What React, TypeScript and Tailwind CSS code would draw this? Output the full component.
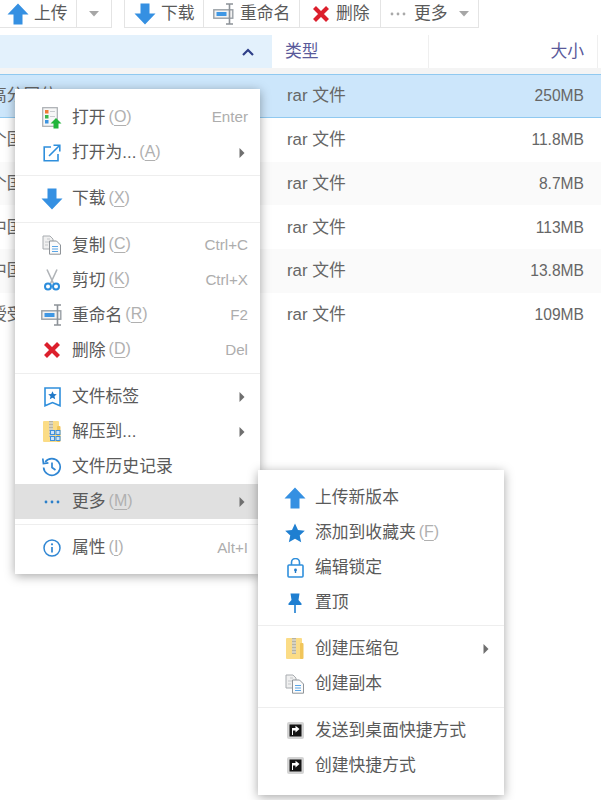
import React from "react";

const FONT = '"Liberation Sans","Noto Sans CJK SC",sans-serif';

function ArrowUp({ s = 22 }: { s?: number }) {
  return (
    <svg width={s} height={s} viewBox="0 0 22 22">
      <path d="M11 0.5 L21.5 11.5 H15.5 V21.5 H6.5 V11.5 H0.5 Z" fill="#3590e2" />
    </svg>
  );
}
function ArrowDown({ s = 22 }: { s?: number }) {
  return (
    <svg width={s} height={s} viewBox="0 0 22 22">
      <path d="M6.5 0.5 H15.5 V10.5 H21.5 L11 21.5 L0.5 10.5 H6.5 Z" fill="#3590e2" />
    </svg>
  );
}
function Rename({ s = 22 }: { s?: number }) {
  return (
    <svg width={s} height={s} viewBox="0 0 22 22">
      <rect x="0.8" y="6.8" width="19" height="8.4" fill="#f2f2f2" stroke="#9aa0a6" strokeWidth="1.4" />
      <rect x="3.5" y="9" width="10" height="4" fill="#3f97e4" />
      <path d="M13 1 H20 M16.5 1 V21 M13 21 H20" stroke="#8d9298" strokeWidth="1.6" fill="none" />
    </svg>
  );
}
function Cross({ s = 18 }: { s?: number }) {
  return (
    <svg width={s} height={s} viewBox="0 0 18 18">
      <path d="M2.5 2.5 L15.5 15.5 M15.5 2.5 L2.5 15.5" stroke="#dc1f2c" strokeWidth="4.2" strokeLinecap="butt" />
    </svg>
  );
}
function Dots({ c = "#2b7fc9" }: { c?: string }) {
  return (
    <svg width="16" height="4" viewBox="0 0 16 4">
      <circle cx="2" cy="2" r="1.4" fill={c} />
      <circle cx="8" cy="2" r="1.4" fill={c} />
      <circle cx="14" cy="2" r="1.4" fill={c} />
    </svg>
  );
}
function OpenApp() {
  return (
    <svg width="20" height="22" viewBox="0 0 20 22">
      <rect x="0.7" y="0.7" width="14.6" height="18.6" fill="#f7f7f7" stroke="#a9adb1" strokeWidth="1.2" />
      <rect x="3" y="3" width="3.5" height="3.5" fill="#ee7a34" />
      <rect x="3" y="8" width="3.5" height="3.5" fill="#39b54a" />
      <rect x="3" y="13" width="3.5" height="3.5" fill="#3b93e0" />
      <path d="M8 4.5 H13 M8 9.5 H13" stroke="#c9ccd0" strokeWidth="1" />
      <path d="M14 11 L19.5 16.5 H16.5 V21.5 H11.5 V16.5 H8.5 Z" fill="#21b53a" />
    </svg>
  );
}
function OpenAs() {
  return (
    <svg width="18" height="18" viewBox="0 0 18 18" fill="none">
      <path d="M8 3 H1.2 V16.8 H15 V10" stroke="#2f8fdc" strokeWidth="1.6" />
      <path d="M6 12 L16 2 M10.5 1.2 H16.8 V7.5" stroke="#2f8fdc" strokeWidth="1.6" />
    </svg>
  );
}
function CopyDoc() {
  return (
    <svg width="20" height="20" viewBox="0 0 20 20">
      <path d="M1 1 H8 L11 4 V14 H1 Z" fill="#f0f0f0" stroke="#a8acb0" />
      <path d="M5 4 H8 M3 7 H8 M3 10 H6" stroke="#c4c7ca" strokeWidth="1" />
      <path d="M7.5 6 H14.5 L18.5 10 V19.2 H7.5 Z" fill="#fbfbfb" stroke="#8f9499" />
      <path d="M10 11.5 H16 M10 14 H16 M10 16.5 H16" stroke="#5aa5e6" strokeWidth="1" />
    </svg>
  );
}
function Scissors() {
  return (
    <svg width="18" height="22" viewBox="0 0 18 22" fill="none">
      <path d="M4 0.5 L10.5 14.5 M14 0.5 L7.5 14.5" stroke="#b0b4b8" strokeWidth="1.6" />
      <circle cx="5" cy="17.5" r="3" stroke="#2b8cdb" strokeWidth="2" />
      <circle cx="13" cy="17.5" r="3" stroke="#2b8cdb" strokeWidth="2" />
    </svg>
  );
}
function Tag() {
  return (
    <svg width="17" height="20" viewBox="0 0 17 20" fill="none">
      <path d="M1 1 H16 V18.8 L8.5 15.5 L1 18.8 Z" stroke="#2f8fdc" strokeWidth="1.6" />
      <path d="M8.5 4.2 L9.8 7 L12.8 7.3 L10.5 9.3 L11.2 12.3 L8.5 10.7 L5.8 12.3 L6.5 9.3 L4.2 7.3 L7.2 7 Z" fill="#2079c8" />
    </svg>
  );
}
function Zip({ grid = false }: { grid?: boolean }) {
  return (
    <svg width="18" height="21" viewBox="0 0 18 21">
      <rect x="0" y="0" width="16" height="21" rx="1" fill="#fbdc86" />
      <rect x="14" y="5" width="3.5" height="16" rx="1" fill="#f1c55a" />
      <rect x="6" y="0" width="4" height="16" fill="#b8b3a0" />
      <path d="M6 2 H10 M6 5 H10 M6 8 H10 M6 11 H10 M6 14 H10" stroke="#f0eee5" strokeWidth="1" />
      {grid && (
        <g fill="#cfe4f8" stroke="#3f8fdb" strokeWidth="1">
          <rect x="7.5" y="9.5" width="4" height="4" />
          <rect x="13" y="9.5" width="4" height="4" />
          <rect x="7.5" y="15.5" width="4" height="4" />
          <rect x="13" y="15.5" width="4" height="4" />
        </g>
      )}
    </svg>
  );
}
function History() {
  return (
    <svg width="20" height="20" viewBox="0 0 20 20" fill="none">
      <path d="M3.2 5 A8.3 8.3 0 1 1 1.6 10.5" stroke="#2f86d3" strokeWidth="1.7" />
      <path d="M0.8 1.5 L1.4 6.5 L6.4 5.8" stroke="#2f86d3" strokeWidth="1.7" />
      <path d="M10 5.5 V10.5 L13.5 13" stroke="#2f86d3" strokeWidth="1.7" />
    </svg>
  );
}
function Info() {
  return (
    <svg width="18" height="18" viewBox="0 0 18 18" fill="none">
      <circle cx="9" cy="9" r="8" stroke="#2f86d3" strokeWidth="1.5" />
      <circle cx="9" cy="5.3" r="1.1" fill="#2f86d3" />
      <path d="M9 8 V13.5" stroke="#2f86d3" strokeWidth="1.7" />
    </svg>
  );
}
function Star() {
  return (
    <svg width="20" height="20" viewBox="0 0 20 20">
      <path d="M10 0.5 L13 7 L19.8 7.7 L14.7 12.4 L16.2 19.3 L10 15.8 L3.8 19.3 L5.3 12.4 L0.2 7.7 L7 7 Z" fill="#1f7fd1" />
    </svg>
  );
}
function Lock() {
  return (
    <svg width="17" height="20" viewBox="0 0 17 20" fill="none">
      <rect x="1" y="7" width="15" height="12" rx="1" stroke="#2f8fdc" strokeWidth="1.6" />
      <path d="M4.5 7 V4.5 A4 4 0 0 1 12.5 4.5 V7" stroke="#2f8fdc" strokeWidth="1.6" />
      <circle cx="8.5" cy="12" r="1.4" fill="#2079c8" />
      <path d="M8.5 12 V15" stroke="#2079c8" strokeWidth="1.4" />
    </svg>
  );
}
function Pin() {
  return (
    <svg width="14" height="20" viewBox="0 0 14 20">
      <path d="M2.5 0.5 H11.5 L10.5 7 L13.5 10.5 V12 H0.5 V10.5 L3.5 7 Z" fill="#1f7fd1" />
      <rect x="6.2" y="12" width="1.6" height="8" fill="#1f7fd1" />
    </svg>
  );
}
function Shortcut() {
  return (
    <svg width="17" height="17" viewBox="0 0 17 17">
      <rect x="0" y="0" width="17" height="17" rx="2" fill="#d4d4d4" />
      <rect x="2.5" y="2.5" width="12" height="12" fill="#141414" />
      <path d="M6 13 V8.5 H8.5 V10.5 L12.5 7 L8.5 3.8 V6 H5 V13 Z" fill="#fff" />
    </svg>
  );
}
function Caret() {
  return (
    <svg width="6" height="10" viewBox="0 0 6 10">
      <path d="M0.5 0 L5.5 5 L0.5 10 Z" fill="#6f6f6f" />
    </svg>
  );
}
function Down() {
  return (
    <svg width="10" height="6" viewBox="0 0 10 6">
      <path d="M0 0 H10 L5 5.5 Z" fill="#a6a6a6" />
    </svg>
  );
}

function Key({ k }: { k: string }) {
  return (
    <span className="mb-[2px] ml-[3px] text-[16px] text-[#b0b0b0]">
      (<span className="underline underline-offset-[3px]">{k}</span>)
    </span>
  );
}

type Item = { icon: React.ReactNode; label: string; k?: string; hint?: string; sub?: boolean; active?: boolean };

function Row({ it }: { it: Item }) {
  return (
    <div className={`flex h-[35px] items-center ${it.active ? "bg-[#e0e0e0]" : ""}`}>
      <div className="flex w-[57px] shrink-0 items-center justify-center pl-[17px]">{it.icon}</div>
      <span className="whitespace-nowrap text-[16.8px] text-[#5a5a5a]">{it.label}</span>
      {it.k && <Key k={it.k} />}
      <div className="flex-1" />
      {it.hint && <span className="mr-[12px] text-[15.2px] text-[#adadad]">{it.hint}</span>}
      {it.sub && (
        <span className="mr-[15px]">
          <Caret />
        </span>
      )}
    </div>
  );
}

function Sep() {
  return (
    <div className="flex h-[11.4px] items-center">
      <div className="h-px w-full bg-[#eeeeee]" />
    </div>
  );
}

const files = [
  { n: "高分冈位", s: "250MB", bg: "bg-[#cce6fb] border-y border-[#90c9f0]" },
  { n: "个国", s: "11.8MB", bg: "bg-white" },
  { n: "个国", s: "8.7MB", bg: "bg-[#fafafa]" },
  { n: "中国", s: "113MB", bg: "bg-white" },
  { n: "中国", s: "13.8MB", bg: "bg-[#fafafa]" },
  { n: "授受", s: "109MB", bg: "bg-white" },
];

function TB({ children, w, cls = "" }: { children: React.ReactNode; w: string; cls?: string }) {
  return (
    <div className={`flex h-full items-center border-r border-b border-[#e4e4e4] bg-white text-[16.8px] text-[#5a5a5a] ${w} ${cls}`}>
      {children}
    </div>
  );
}

const menu: (Item | null)[] = [
  { icon: <OpenApp />, label: "打开", k: "O", hint: "Enter" },
  { icon: <OpenAs />, label: "打开为...", k: "A", sub: true },
  null,
  { icon: <ArrowDown />, label: "下载", k: "X" },
  null,
  { icon: <CopyDoc />, label: "复制", k: "C", hint: "Ctrl+C" },
  { icon: <Scissors />, label: "剪切", k: "K", hint: "Ctrl+X" },
  { icon: <Rename />, label: "重命名", k: "R", hint: "F2" },
  { icon: <Cross />, label: "删除", k: "D", hint: "Del" },
  null,
  { icon: <Tag />, label: "文件标签", sub: true },
  { icon: <Zip grid />, label: "解压到...", sub: true },
  { icon: <History />, label: "文件历史记录" },
  { icon: <Dots />, label: "更多", k: "M", sub: true, active: true },
  null,
  { icon: <Info />, label: "属性", k: "I", hint: "Alt+I" },
];

const submenu: (Item | null)[] = [
  { icon: <ArrowUp />, label: "上传新版本" },
  { icon: <Star />, label: "添加到收藏夹", k: "F" },
  { icon: <Lock />, label: "编辑锁定" },
  { icon: <Pin />, label: "置顶" },
  null,
  { icon: <Zip />, label: "创建压缩包", sub: true },
  { icon: <CopyDoc />, label: "创建副本" },
  null,
  { icon: <Shortcut />, label: "发送到桌面快捷方式" },
  { icon: <Shortcut />, label: "创建快捷方式" },
];

export default function App() {
  return (
    <div className="relative h-[800px] w-[601px] overflow-hidden bg-white" style={{ fontFamily: FONT }}>
      {/* toolbar */}
      <div className="flex h-[28px] bg-white">
        <TB w="w-[77px]" cls="pl-[7px] gap-[5px]">
          <ArrowUp />
          <span>上传</span>
        </TB>
        <TB w="w-[35px]" cls="justify-center">
          <Down />
        </TB>
        <div className="w-[12px]" />
        <TB w="w-[80px]" cls="pl-[9px] gap-[5px] border-l">
          <ArrowDown />
          <span>下载</span>
        </TB>
        <TB w="w-[96px]" cls="pl-[9px] gap-[5px]">
          <Rename />
          <span>重命名</span>
        </TB>
        <TB w="w-[81px]" cls="pl-[12px] gap-[6px]">
          <Cross />
          <span>删除</span>
        </TB>
        <TB w="w-[98px]" cls="pl-[9px]">
          <Dots c="#a9a9a9" />
          <span className="ml-[8px]">更多</span>
          <span className="ml-[11px]">
            <Down />
          </span>
        </TB>
      </div>
      {/* header */}
      <div className="mt-[7px] flex h-[33px]">
        <div className="flex w-[272px] items-center justify-end bg-[#e3f1fc] pr-[18px]">
          <svg width="12" height="8" viewBox="0 0 12 8" fill="none">
            <path d="M1 7 L6 2 L11 7" stroke="#2f3f88" strokeWidth="2.2" />
          </svg>
        </div>
        <div className="flex w-[157px] items-center border-r border-[#efefef] pl-[13px] text-[16.8px] text-[#5a5a9a]">类型</div>
        <div className="flex w-[169px] items-center justify-end border-r border-[#efefef] pr-[13px] text-[16.8px] text-[#5a5a9a]">大小</div>
      </div>
      <div className="h-[6px] bg-[#f4f4f4]" />
      {/* rows */}
      <div>
        {files.map((f, i) => (
          <div key={i} className={`flex h-[43.8px] items-center text-[16.8px] text-[#666666] ${f.bg}`}>
            <div className="w-[272px] overflow-hidden whitespace-nowrap">
              <span className="ml-[-10px] inline-block">{f.n}</span>
            </div>
            <div className="w-[157px] pl-[15px]">rar 文件</div>
            <div className="w-[155px] text-right text-[15.6px]">{f.s}</div>
          </div>
        ))}
      </div>

      {/* context menu */}
      <div className="absolute left-[15px] top-[89px] w-[245px] bg-white pt-[11px] pb-[8px] shadow-[0_2px_10px_rgba(0,0,0,0.35)]">
        {menu.map((it, i) => (it ? <Row key={i} it={it} /> : <Sep key={i} />))}
      </div>

      {/* submenu */}
      <div className="absolute left-[258px] top-[470px] w-[246px] bg-white pt-[10px] pb-[12px] shadow-[0_2px_10px_rgba(0,0,0,0.35)]">
        {submenu.map((it, i) => (it ? <Row key={i} it={it} /> : <Sep key={i} />))}
      </div>
    </div>
  );
}
